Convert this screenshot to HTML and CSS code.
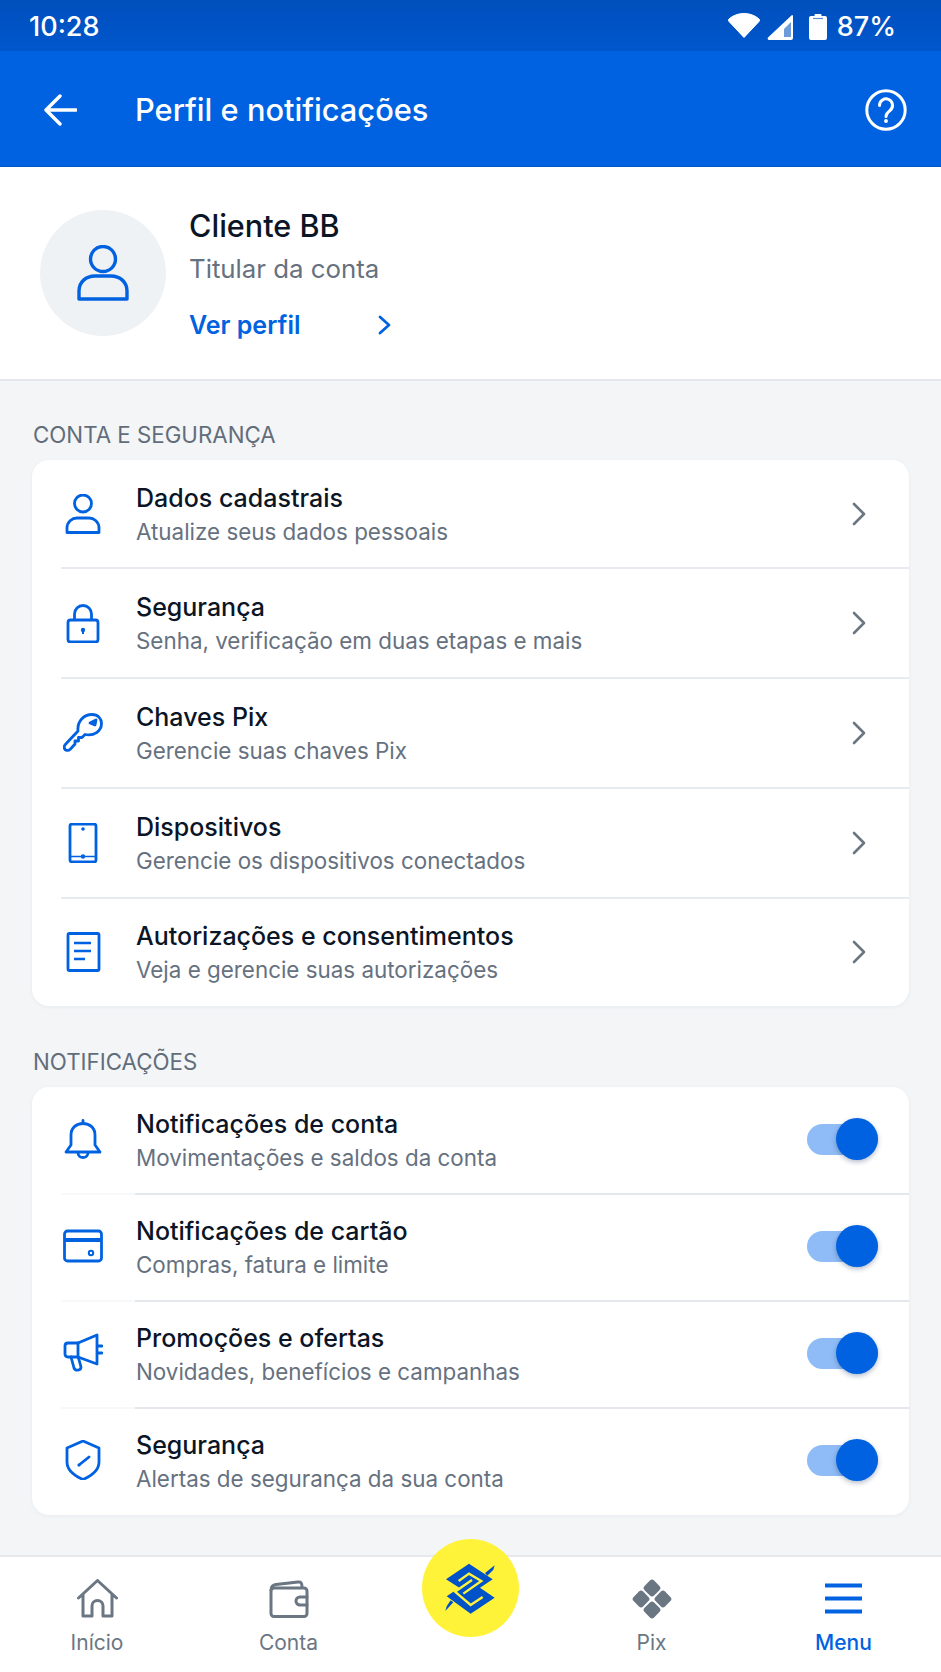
FILE: index.html
```html
<!DOCTYPE html>
<html lang="pt-BR">
<head>
<meta charset="utf-8">
<title>Perfil e notificações</title>
<link rel="stylesheet" href="styles.css">
</head>
<body>
<div class="app">
  <div class="statusbar">
    <span class="clock">10:28</span>
    <div class="status-right">
      <svg class="st-wifi" width="32" height="25" viewBox="0 0 32 25"><path d="M16 24.500 L1 8.500 C0 7.500 0.300 6.500 1.200 5.800 C5 2.500 10 0.500 16 0.500 C22 0.500 27 2.500 30.800 5.800 C31.700 6.500 32 7.500 31 8.500 Z" fill="#fff" stroke="#fff" stroke-linejoin="round"/></svg>
      <svg class="st-signal" width="26" height="26" viewBox="0 0 26 26"><path d="M25 1 a1 1 0 0 1 1 1 V24 a2 2 0 0 1-2 2 H2 a1.500 1.500 0 0 1-1-2.500 Z" fill="#fff"/><path d="M17 15 L24 8 V23 H17 Z" fill="#6d9bdc"/></svg>
      <svg class="st-batt" width="18" height="26" viewBox="0 0 18 26"><path d="M5.500 2 V1 a1 1 0 0 1 1-1 h5 a1 1 0 0 1 1 1 V2 H16 a2 2 0 0 1 2 2 V24 a2 2 0 0 1-2 2 H2 a2 2 0 0 1-2-2 V4 a2 2 0 0 1 2-2 Z" fill="#fff"/><path d="M4 4.500 H14" stroke="#5a8fd8" stroke-width="1.200"/></svg>
      <span class="pct">87%</span>
    </div>
  </div>
  <header class="topbar">
    <svg class="back" width="33" height="32" viewBox="0 0 33 32" fill="none" stroke="#fff" stroke-width="3.400" stroke-linecap="round" stroke-linejoin="round"><path d="M16 2 L2 16 L16 30 M2 16 H32"/></svg>
    <h1 class="title">Perfil e notificações</h1>
    <svg class="help" width="42" height="42" viewBox="0 0 42 42" fill="none" stroke="#fff" stroke-width="3"><circle cx="21" cy="21" r="19.200"/><path d="M14.500 16.500 a6.500 6.500 0 1 1 10.500 5 c-2.500 2-4 3-4 6" stroke-linecap="round"/><circle cx="21" cy="32" r="1.300" fill="#fff" stroke-width="1.200"/></svg>
  </header>
  <section class="profile">
    <div class="avatar">
      <svg width="52" height="56" viewBox="0 0 52 56" fill="none" stroke="#0062e0" stroke-width="3.400" stroke-linejoin="round"><circle cx="26" cy="14" r="12.500"/><path d="M2 54 V46 C2 37 9 31 18 31 H34 C43 31 50 37 50 46 V54 Z"/></svg>
    </div>
    <div class="profile-text">
      <div class="name">Cliente BB</div>
      <div class="role">Titular da conta</div>
      <a class="view-link"><span>Ver perfil</span><svg width="15" height="20" viewBox="0 0 15 20" fill="none" stroke="#0062e0" stroke-width="2.800" stroke-linecap="round" stroke-linejoin="round"><path d="M3 2 L12 10 L3 18"/></svg></a>
    </div>
  </section>
  <main class="content">
    <h2 class="sec-label first">CONTA E SEGURANÇA</h2>
    <div class="card">
      <div class="row">
        <svg class="ico" width="40" height="40" viewBox="0 0 40 40" fill="none" stroke="#0062e0" stroke-width="2.800" stroke-linejoin="round"><circle cx="20" cy="9.500" r="8.500"/><path d="M4 38.500 V34 C4 28 9 24 14 24 H26 C31 24 36 28 36 34 V38.500 Z"/></svg>
        <div class="txt"><div class="t">Dados cadastrais</div><div class="s">Atualize seus dados pessoais</div></div>
        <svg class="chev" width="16" height="24" viewBox="0 0 16 24" fill="none" stroke="#6b7683" stroke-width="2.600" stroke-linecap="round" stroke-linejoin="round"><path d="M3 2 L13 12 L3 22"/></svg>
      </div>
      <div class="row">
        <svg class="ico" width="40" height="40" viewBox="0 0 40 40" fill="none" stroke="#0062e0" stroke-width="2.800" stroke-linejoin="round"><rect x="5" y="17" width="30" height="22" rx="2.500"/><path d="M11.500 17 V11 a8.500 8.500 0 0 1 17 0 V17"/><circle cx="20" cy="27" r="2.200" fill="#0062e0" stroke="none"/><path d="M20 27 V31" stroke-width="2"/></svg>
        <div class="txt"><div class="t">Segurança</div><div class="s">Senha, verificação em duas etapas e mais</div></div>
        <svg class="chev" width="16" height="24" viewBox="0 0 16 24" fill="none" stroke="#6b7683" stroke-width="2.600" stroke-linecap="round" stroke-linejoin="round"><path d="M3 2 L13 12 L3 22"/></svg>
      </div>
      <div class="row">
        <svg class="ico" width="40" height="40" viewBox="0 0 40 40" fill="none" stroke="#0062e0" stroke-width="2.800" stroke-linejoin="round" stroke-linecap="round"><path d="M15 18 C14 8 21 1.500 29 1.500 C35 1.500 38.500 5.500 38.500 10.500 C38.500 18 31 23.500 22 21.500 L19 24.500 H15.500 V28 H12 V31 L7.500 36 C5 38.500 1.500 37.500 1.200 34.500 C1 33 1.800 32 3 30.800 Z"/><path d="M27 10 L33 7 L32 12 Z" fill="#0062e0"/></svg>
        <div class="txt"><div class="t">Chaves Pix</div><div class="s">Gerencie suas chaves Pix</div></div>
        <svg class="chev" width="16" height="24" viewBox="0 0 16 24" fill="none" stroke="#6b7683" stroke-width="2.600" stroke-linecap="round" stroke-linejoin="round"><path d="M3 2 L13 12 L3 22"/></svg>
      </div>
      <div class="row">
        <svg class="ico" width="40" height="40" viewBox="0 0 40 40" fill="none" stroke="#0062e0" stroke-width="2.800" stroke-linejoin="round"><rect x="7" y="1" width="26" height="38" rx="2"/><circle cx="20" cy="6" r="1.800" fill="#0062e0" stroke="none"/><path d="M8 33.500 H32" stroke-width="1.500"/><circle cx="20" cy="33.500" r="2.200" fill="#0062e0" stroke="none"/></svg>
        <div class="txt"><div class="t">Dispositivos</div><div class="s">Gerencie os dispositivos conectados</div></div>
        <svg class="chev" width="16" height="24" viewBox="0 0 16 24" fill="none" stroke="#6b7683" stroke-width="2.600" stroke-linecap="round" stroke-linejoin="round"><path d="M3 2 L13 12 L3 22"/></svg>
      </div>
      <div class="row">
        <svg class="ico" width="40" height="40" viewBox="0 0 40 40" fill="none" stroke="#0062e0" stroke-width="2.800" stroke-linejoin="round"><rect x="5" y="1.500" width="31" height="37" rx="1.500"/><path d="M11 11 H28 M11 19 H28 M11 27 H22" stroke-width="2.600"/></svg>
        <div class="txt"><div class="t">Autorizações e consentimentos</div><div class="s">Veja e gerencie suas autorizações</div></div>
        <svg class="chev" width="16" height="24" viewBox="0 0 16 24" fill="none" stroke="#6b7683" stroke-width="2.600" stroke-linecap="round" stroke-linejoin="round"><path d="M3 2 L13 12 L3 22"/></svg>
      </div>
    </div>
    <h2 class="sec-label">NOTIFICAÇÕES</h2>
    <div class="card">
      <div class="row nrow">
        <svg class="ico" width="40" height="40" viewBox="0 0 40 40" fill="none" stroke="#0062e0" stroke-width="2.800" stroke-linejoin="round" stroke-linecap="round"><path d="M3 33 L8 26 V16 C8 9 13 4.500 20 4.500 C27 4.500 32 9 32 16 V26 L37 33 Z"/><path d="M20 4 V1.500"/><path d="M15 34 a5 4.500 0 0 0 10 0"/></svg>
        <div class="txt"><div class="t">Notificações de conta</div><div class="s">Movimentações e saldos da conta</div></div>
        <div class="switch"><span class="thumb"></span></div>
      </div>
      <div class="row nrow">
        <svg class="ico" width="40" height="40" viewBox="0 0 40 40" fill="none" stroke="#0062e0" stroke-width="2.800" stroke-linejoin="round"><rect x="1.500" y="5" width="37" height="30" rx="3"/><path d="M2 14 H38" stroke-width="4"/><circle cx="28" cy="27" r="2.200" stroke-width="2"/></svg>
        <div class="txt"><div class="t">Notificações de cartão</div><div class="s">Compras, fatura e limite</div></div>
        <div class="switch"><span class="thumb"></span></div>
      </div>
      <div class="row nrow">
        <svg class="ico" width="40" height="40" viewBox="0 0 40 40" fill="none" stroke="#0062e0" stroke-width="2.800" stroke-linejoin="round" stroke-linecap="round"><path d="M15 10 L34 2 V31 L15 24 H5 C3 24 2 23 2 21 V13 C2 11 3 10 5 10 Z"/><path d="M15 10 V24"/><path d="M8 24 L11 35 C12 38 18 38 18 34 L15.500 25"/><path d="M35 13 H39 M35 20 H39"/></svg>
        <div class="txt"><div class="t">Promoções e ofertas</div><div class="s">Novidades, benefícios e campanhas</div></div>
        <div class="switch"><span class="thumb"></span></div>
      </div>
      <div class="row nrow">
        <svg class="ico" width="40" height="40" viewBox="0 0 40 40" fill="none" stroke="#0062e0" stroke-width="2.800" stroke-linejoin="round" stroke-linecap="round"><path d="M20 1 L36 8 V22 C36 30 28 36 20 39.500 C12 36 4 30 4 22 V8 Z"/><path d="M16 25 L26 17"/><circle cx="16" cy="25" r="1.500" fill="#0062e0" stroke="none"/></svg>
        <div class="txt"><div class="t">Segurança</div><div class="s">Alertas de segurança da sua conta</div></div>
        <div class="switch"><span class="thumb"></span></div>
      </div>
    </div>
  </main>
  <nav class="tabbar">
    <div class="tab">
      <svg width="42" height="40" viewBox="0 0 42 40" fill="none" stroke="#6b7683" stroke-width="3" stroke-linejoin="round" stroke-linecap="round"><path d="M2.500 19 L21.500 1.500 L40.500 19 M7 15.500 V37 H16 V27 a5.500 5.500 0 0 1 11 0 V37 H36 V15.500"/></svg>
      <span>Início</span>
    </div>
    <div class="tab">
      <svg width="42" height="40" viewBox="0 0 42 40" fill="none" stroke="#6b7683" stroke-width="3" stroke-linejoin="round" stroke-linecap="round"><path d="M3 11 C3 7 5 6 8 5.500 L30 3 C33 2.700 34 4 34 8"/><rect x="3" y="9" width="36" height="28.500" rx="3"/><path d="M39 18 H32 a3.500 3.500 0 0 0 0 8 H39"/></svg>
      <span>Conta</span>
    </div>
    <div class="tab tab-fab"></div>
    <div class="tab">
      <svg width="42" height="40" viewBox="0 0 42 40" fill="#6b7683"><g transform="rotate(45 21 20)"><rect x="6.500" y="5.500" width="13.500" height="13.500" rx="3"/><rect x="22" y="5.500" width="13.500" height="13.500" rx="3"/><rect x="6.500" y="21" width="13.500" height="13.500" rx="3"/><rect x="22" y="21" width="13.500" height="13.500" rx="3"/></g></svg>
      <span>Pix</span>
    </div>
    <div class="tab active">
      <svg width="42" height="40" viewBox="0 0 42 40" fill="#0062e0"><rect x="2" y="4.500" width="37" height="4"/><rect x="2" y="17.500" width="37" height="4"/><rect x="2" y="30.500" width="37" height="4"/></svg>
      <span>Menu</span>
    </div>
    <div class="fab">
      <svg width="97" height="98" viewBox="66 24 291 294">
        <path d="M138 145 L207 98 L278 145 L240 170 L284 200 L212 248 L140 196 L178 170 Z" fill="#0052c8"/>
        <path d="M255 126 L284 103 L280 116 L262 134 Z M160 214 L136 240 L140 226 L152 208 Z" fill="#0052c8"/>
        <path d="M176 150 L207 128 L244 150 L190 188 M216 147 L165 182 L212 222 L248 198" fill="none" stroke="#fff33a" stroke-width="7"/>
      </svg>
    </div>
  </nav>
</div>
</body>
</html>
```

FILE: styles.css
```css
* { box-sizing: border-box; }
html, body { margin: 0; padding: 0; }
body { font-family: Inter, "Noto Sans", sans-serif; background: #f3f5f7; }
.app { width: 941px; height: 1672px; display: flex; flex-direction: column; overflow: hidden; }

.statusbar { height: 51px; flex: none; display: flex; align-items: center; justify-content: space-between; padding: 2px 45px 0 29px; background: linear-gradient(#004fbd, #0057cc); color: #fff; }
.clock { font-size: 27px; font-weight: 500; }
.status-right { display: flex; align-items: center; }
.st-wifi { margin-right: 7px; margin-top: -2px; }
.st-signal { margin-right: 16px; }
.st-batt { margin-right: 10px; }
.pct { font-size: 27px; font-weight: 500; }

.topbar { height: 116px; flex: none; display: flex; align-items: center; padding: 2px 34px 0 44px; background: #0062e0; border-bottom: 1px solid #0058cc; }
.title { flex: 1; margin: 0 0 0 58px; font-size: 30.800px; font-weight: 500; color: #fff; }

.profile { height: 214px; flex: none; display: flex; align-items: center; padding: 0 40px; gap: 23px; background: #fff; border-bottom: 2px solid #e3e6ea; }
.avatar { width: 126px; height: 126px; border-radius: 50%; background: #eff2f5; display: flex; align-items: center; justify-content: center; }
.profile-text { display: flex; flex-direction: column; }
.name { font-size: 30.600px; font-weight: 500; color: #0b1526; line-height: 38px; margin-top: 1px; }
.role { font-size: 25.800px; color: #667180; line-height: 32px; margin-top: 8px; }
.view-link { display: flex; align-items: center; gap: 77px; font-size: 25px; font-weight: 600; color: #0062e0; line-height: 32px; margin-top: 24px; }

.content { flex: 1; padding: 0 32px; min-height: 0; }
.sec-label { margin: 0; height: 30px; padding: 41px 0 10px 1px; box-sizing: content-box; font-size: 22.300px; font-weight: 400; color: #626d7a; line-height: 30px; }
.sec-label.first { padding-top: 39px; }
.card { background: #fff; border-radius: 17px; box-shadow: 0 1px 4px rgba(30, 50, 80, .05); overflow: hidden; }

.row { height: 110px; display: flex; align-items: center; padding: 0 32px; position: relative; }
.row:first-child, .row:last-child { height: 108px; }
.row + .row::before { content: ""; position: absolute; left: 29px; right: 0; top: -1px; height: 2px; background: #e7eaee; }
.nrow, .nrow:first-child, .nrow:last-child { height: 107px; }
.nrow + .nrow::before { background: linear-gradient(90deg, #f7f8fa 0, #f7f8fa 74px, #e4e8ed 74px); }
.ico { flex: none; margin-left: -1px; }
.nrow .ico, .switch { margin-bottom: 3px; }
.txt { flex: 1; margin-left: 33px; min-width: 0; }
.t { font-size: 25px; font-weight: 500; line-height: 32px; color: #0b1526; }
.s { font-size: 22.400px; line-height: 30px; color: #667180; margin-top: 3px; }
.chev { flex: none; margin-right: 10px; }

.switch { flex: none; width: 71px; height: 31px; border-radius: 16px; background: #8fbcf6; position: relative; margin-right: -1px; }
.thumb { position: absolute; width: 42px; height: 42px; border-radius: 50%; background: #0062e0; top: -5.500px; right: 0; box-shadow: 0 2px 5px rgba(0, 30, 80, .3); }

.tabbar { height: 117px; flex: none; display: grid; grid-template-columns: 194px 189px 174px 189px 195px; background: #fff; border-top: 2px solid #e6e8ec; position: relative; }
.tab { display: flex; flex-direction: column; align-items: center; padding-top: 22px; font-size: 21px; color: #6b7683; }
.tab svg { display: block; }
.tab span { margin-top: 11px; line-height: 26px; }
.tab.active { color: #0062e0; font-weight: 500; }
.fab { position: absolute; left: 422px; top: -18px; width: 97px; height: 98px; border-radius: 50%; background: #fff33a; }
.fab svg { display: block; }
```
